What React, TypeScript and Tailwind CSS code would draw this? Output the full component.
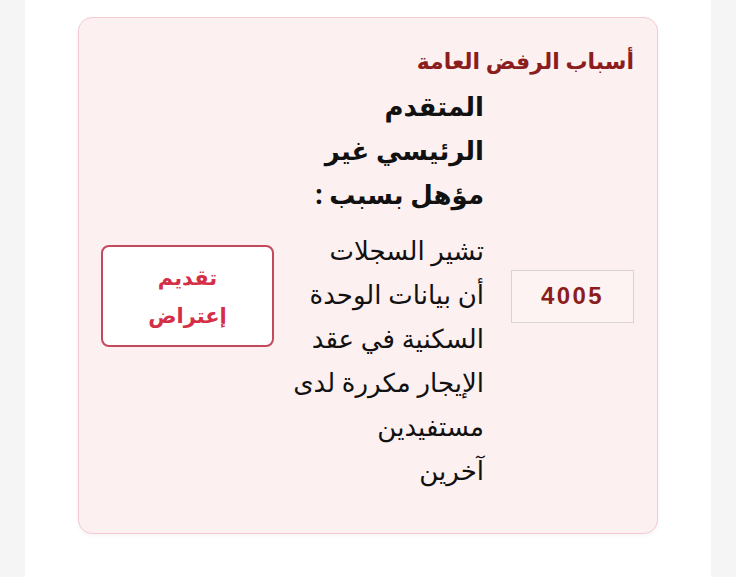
export default function App() {
  return (
    <div
      dir="rtl"
      className="flex h-[577px] w-full justify-center bg-[#f5f5f5]"
      style={{ fontFamily: '"Noto Sans", "DejaVu Sans", sans-serif' }}
    >
      <div className="w-[686px] bg-white px-[53px] pt-[17px]">
        {/* general rejection reasons card */}
        <section className="h-[517px] rounded-[14px] border border-[#f4c9d1] bg-[#fdf0f0] px-[23px] pt-[26px] shadow-[0_2px_4px_rgba(0,0,0,0.04)]">
          <h2 className="text-[22px] font-bold leading-[32px] text-[#8c1d1d]">
            أسباب الرفض العامة
          </h2>

          <div className="mt-[8px] flex items-center">
            <div
              className="mt-[16px] flex h-[53px] w-[123px] shrink-0 items-center justify-center border border-[#d9d3d4] bg-[#fdf3f3] text-[24px] font-bold tracking-[0.1em] text-[#8c1d1d]"
              style={{ fontFamily: '"Liberation Sans", Arial, sans-serif' }}
            >
              4005
            </div>

            <div className="mr-[27px] w-[184px] shrink-0 whitespace-nowrap text-[26px] leading-[44px] text-[#111]">
              <p className="font-bold">
                المتقدم
                <br />
                الرئيسي غير
                <br />
                مؤهل بسبب :
              </p>
              <p className="mt-[12px]">
                تشير السجلات
                <br />
                أن بيانات الوحدة
                <br />
                السكنية في عقد
                <br />
                الإيجار مكررة لدى
                <br />
                مستفيدين
                <br />
                آخرين
              </p>
            </div>

            <button
              type="button"
              className="mr-[26px] mt-[16px] flex h-[102px] w-[173px] shrink-0 items-center justify-center rounded-[8px] border-2 border-[#c4495b] bg-white px-6 text-[21px] font-bold leading-[38px] text-[#d42f46]"
            >
              تقديم
              <br />
              إعتراض
            </button>
          </div>
        </section>
      </div>
    </div>
  );
}
